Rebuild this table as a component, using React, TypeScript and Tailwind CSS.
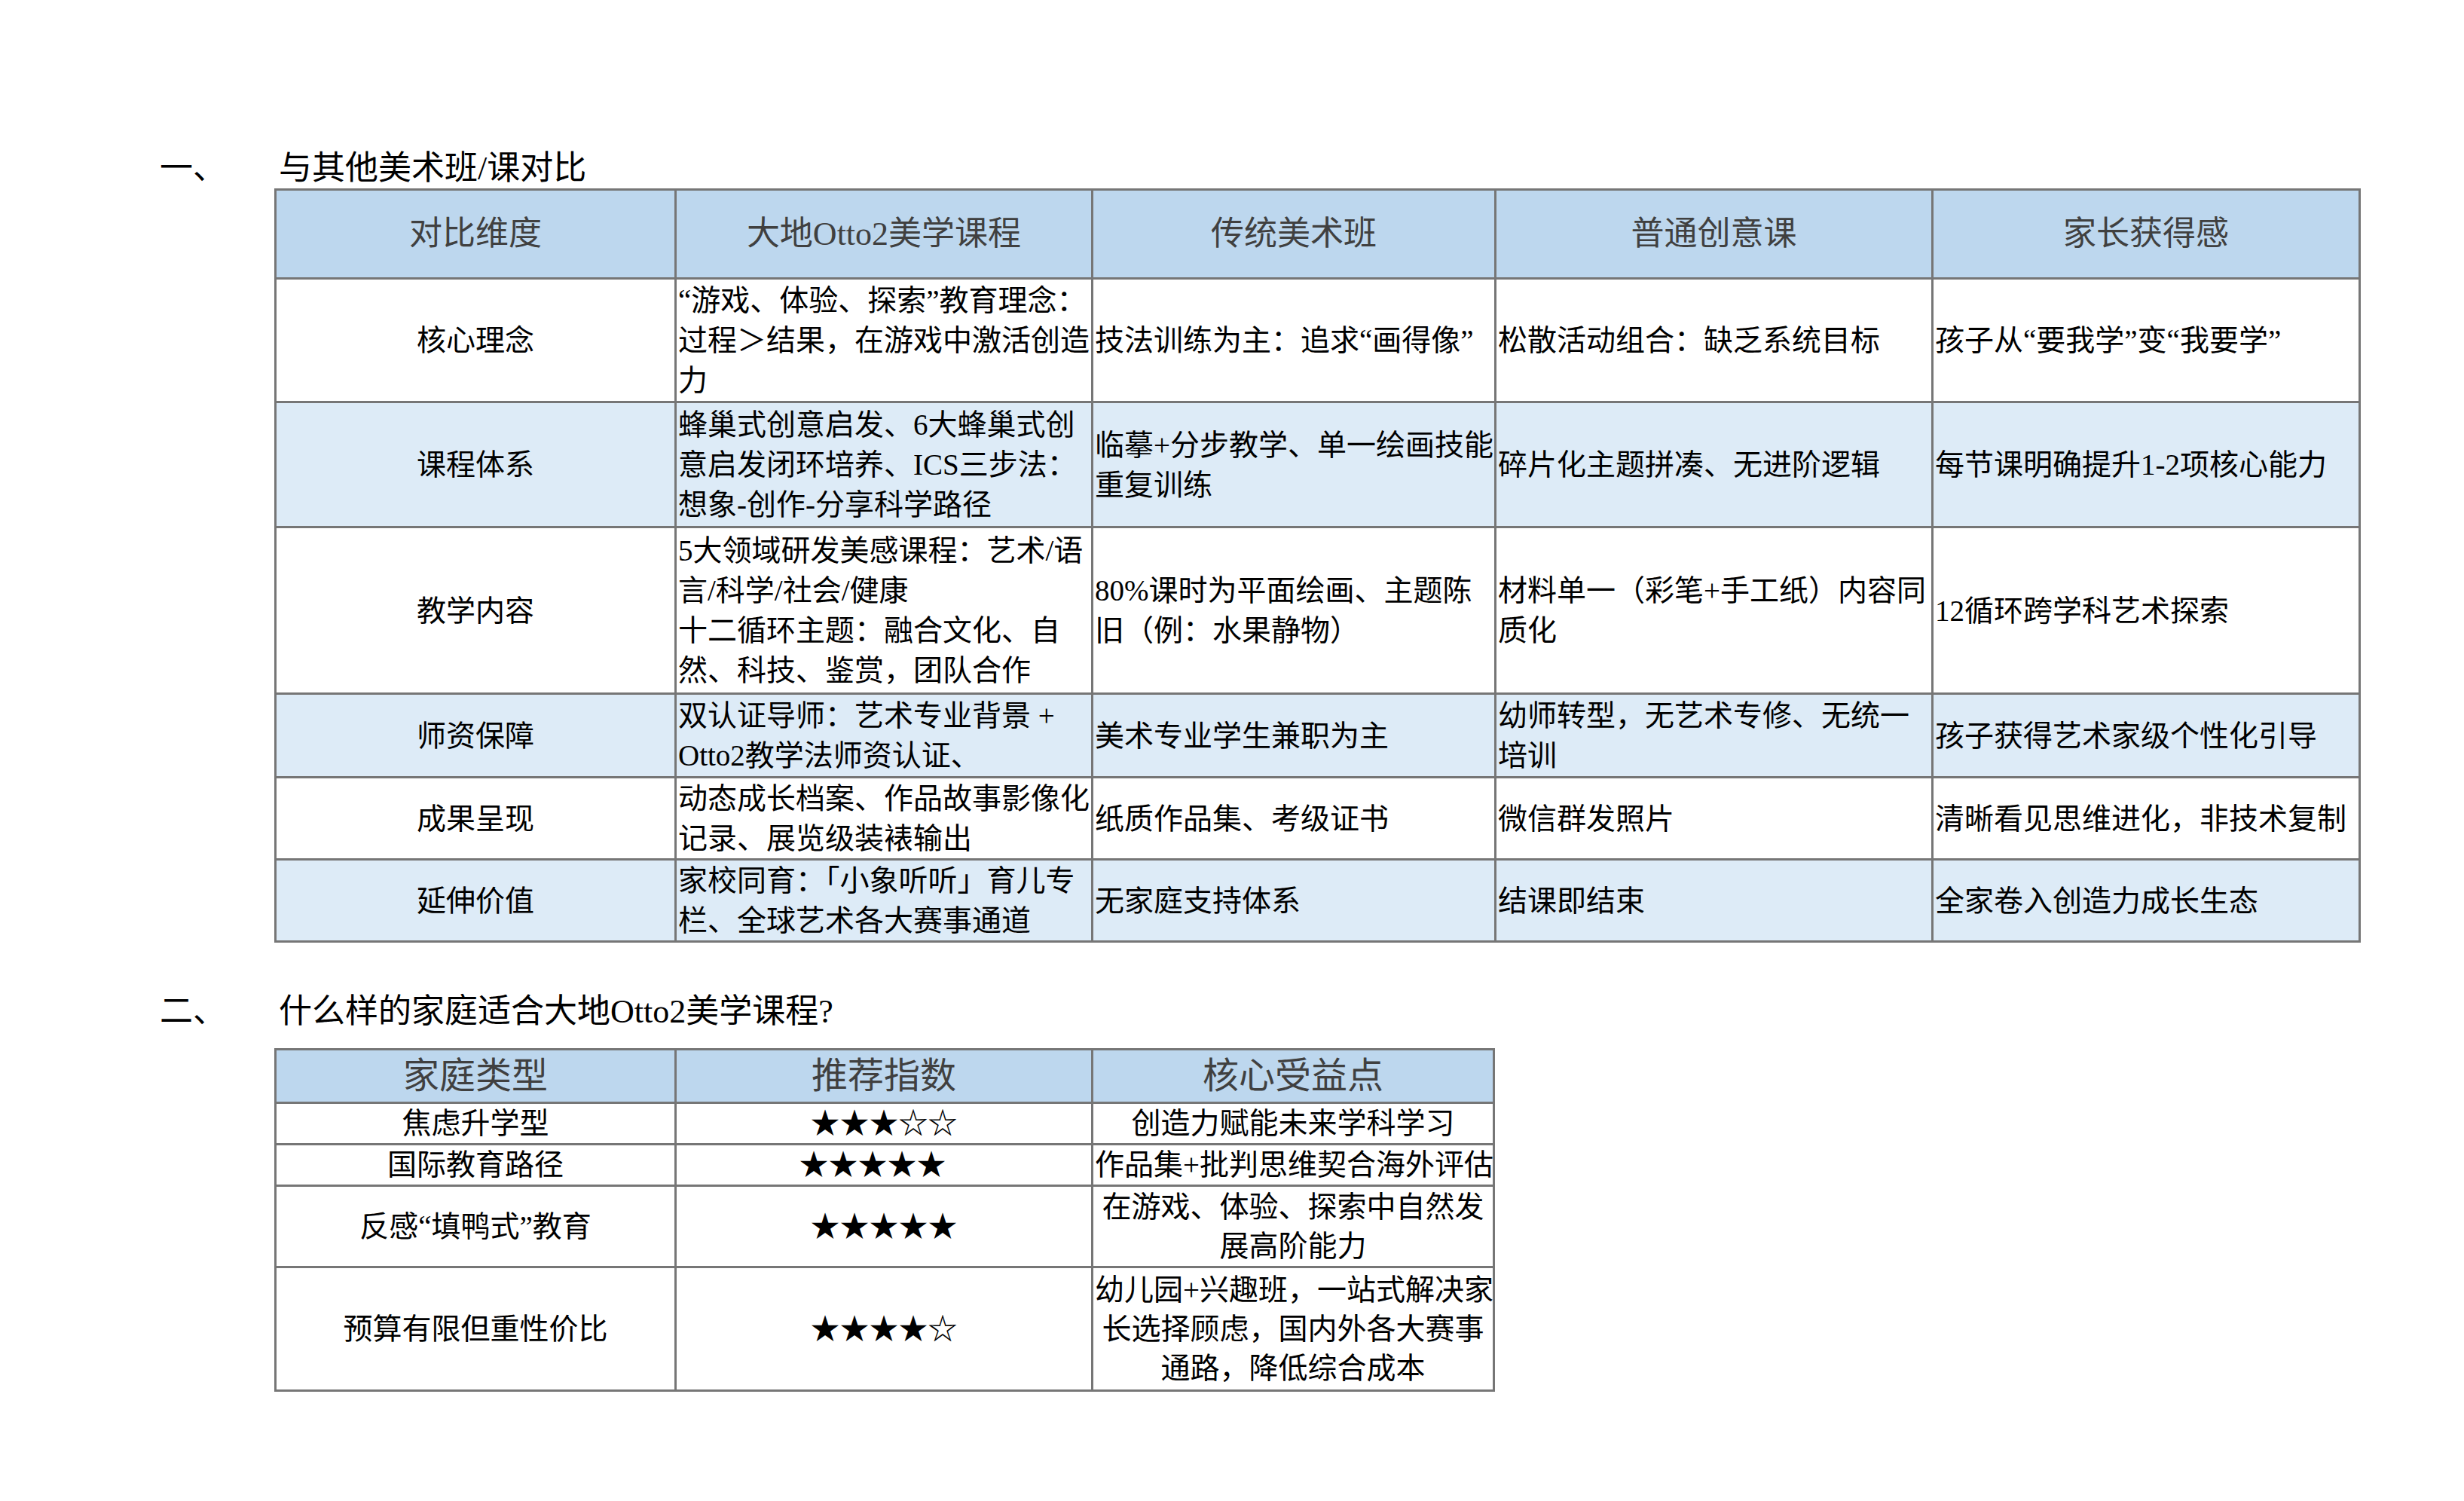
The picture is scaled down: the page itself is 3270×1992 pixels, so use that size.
import React from "react";

type Cell = string[];

const t1Header = ["对比维度", "大地Otto2美学课程", "传统美术班", "普通创意课", "家长获得感"];

const t1Rows: { h: string; bg: string; cells: Cell[] }[] = [
  {
    h: "h-[164px]",
    bg: "bg-white",
    cells: [
      ["核心理念"],
      ["“游戏、体验、探索”教育理念：", "过程＞结果，在游戏中激活创造", "力"],
      ["技法训练为主：追求“画得像”"],
      ["松散活动组合：缺乏系统目标"],
      ["孩子从“要我学”变“我要学”"],
    ],
  },
  {
    h: "h-[166px]",
    bg: "bg-[#ddebf7]",
    cells: [
      ["课程体系"],
      ["蜂巢式创意启发、6大蜂巢式创", "意启发闭环培养、ICS三步法：", "想象-创作-分享科学路径"],
      ["临摹+分步教学、单一绘画技能", "重复训练"],
      ["碎片化主题拼凑、无进阶逻辑"],
      ["每节课明确提升1-2项核心能力"],
    ],
  },
  {
    h: "h-[221px]",
    bg: "bg-white",
    cells: [
      ["教学内容"],
      ["5大领域研发美感课程：艺术/语", "言/科学/社会/健康", "十二循环主题：融合文化、自", "然、科技、鉴赏，团队合作"],
      ["80%课时为平面绘画、主题陈", "旧（例：水果静物）"],
      ["材料单一（彩笔+手工纸）内容同", "质化"],
      ["12循环跨学科艺术探索"],
    ],
  },
  {
    h: "h-[111px]",
    bg: "bg-[#ddebf7]",
    cells: [
      ["师资保障"],
      ["双认证导师：艺术专业背景 +", "Otto2教学法师资认证、"],
      ["美术专业学生兼职为主"],
      ["幼师转型，无艺术专修、无统一", "培训"],
      ["孩子获得艺术家级个性化引导"],
    ],
  },
  {
    h: "h-[109px]",
    bg: "bg-white",
    cells: [
      ["成果呈现"],
      ["动态成长档案、作品故事影像化", "记录、展览级装裱输出"],
      ["纸质作品集、考级证书"],
      ["微信群发照片"],
      ["清晰看见思维进化，非技术复制"],
    ],
  },
  {
    h: "h-[109px]",
    bg: "bg-[#ddebf7]",
    cells: [
      ["延伸价值"],
      ["家校同育：「小象听听」育儿专", "栏、全球艺术各大赛事通道"],
      ["无家庭支持体系"],
      ["结课即结束"],
      ["全家卷入创造力成长生态"],
    ],
  },
];

const t2Rows: { h: string; cells: Cell[]; starPad?: boolean }[] = [
  { h: "h-[53px]", cells: [["焦虑升学型"], ["★★★☆☆"], ["创造力赋能未来学科学习"]] },
  { h: "h-[55px]", cells: [["国际教育路径"], ["★★★★★"], ["作品集+批判思维契合海外评估"]], starPad: true },
  {
    h: "h-[108px]",
    cells: [["反感“填鸭式”教育"], ["★★★★★"], ["在游戏、体验、探索中自然发", "展高阶能力"]],
  },
  {
    h: "h-[164px]",
    cells: [
      ["预算有限但重性价比"],
      ["★★★★☆"],
      ["幼儿园+兴趣班，一站式解决家", "长选择顾虑，国内外各大赛事", "通路，降低综合成本"],
    ],
  },
];

function Lines({ lines }: { lines: string[] }) {
  return (
    <>
      {lines.map((l, i) => (
        <div key={i} className="whitespace-pre">
          {l}
        </div>
      ))}
    </>
  );
}

export default function App() {
  return (
    <div className="w-[3270px] h-[1992px] bg-white text-black font-['Liberation_Serif','Noto_Sans_CJK_SC',sans-serif]">
      <div className="pt-[198px]">
        <h2 className="flex h-[52px] items-center text-[44px] leading-[52px] font-normal">
          <span className="ml-[212px] w-[158px]">一、</span>
          <span>与其他美术班/课对比</span>
        </h2>
        <table className="ml-[364px] w-[2766px] table-fixed border-collapse">
          <colgroup>
            <col className="w-[531px]" />
            <col className="w-[553px]" />
            <col className="w-[535px]" />
            <col className="w-[580px]" />
            <col className="w-[567px]" />
          </colgroup>
          <thead>
            <tr className="h-[118px] bg-[#bdd7ee]">
              {t1Header.map((h, i) => (
                <th
                  key={i}
                  className="border-[3px] border-[#767676] p-0 text-center align-middle text-[44px] leading-[52px] font-normal text-[#404040]"
                >
                  {h}
                </th>
              ))}
            </tr>
          </thead>
          <tbody>
            {t1Rows.map((r, ri) => (
              <tr key={ri} className={`${r.h} ${r.bg}`}>
                {r.cells.map((c, ci) => (
                  <td
                    key={ci}
                    className={`border-[3px] border-[#767676] px-[2px] py-0 align-middle text-[39px] leading-[53px] ${
                      ci === 0 ? "text-center" : "text-left"
                    }`}
                  >
                    <Lines lines={c} />
                  </td>
                ))}
              </tr>
            ))}
          </tbody>
        </table>

        <h2 className="mt-[66px] flex h-[52px] items-center text-[44px] leading-[52px] font-normal">
          <span className="ml-[212px] w-[158px]">二、</span>
          <span>什么样的家庭适合大地Otto2美学课程?</span>
        </h2>
        <table className="ml-[364px] mt-[22px] w-[1617px] table-fixed border-collapse">
          <colgroup>
            <col className="w-[531px]" />
            <col className="w-[553px]" />
            <col className="w-[533px]" />
          </colgroup>
          <thead>
            <tr className="h-[71px] bg-[#bdd7ee]">
              {["家庭类型", "推荐指数", "核心受益点"].map((h, i) => (
                <th
                  key={i}
                  className="border-[3px] border-[#767676] p-0 text-center align-middle text-[48px] leading-[60px] font-normal text-[#404040]"
                >
                  {h}
                </th>
              ))}
            </tr>
          </thead>
          <tbody>
            {t2Rows.map((r, ri) => (
              <tr key={ri} className={`${r.h} bg-white`}>
                {r.cells.map((c, ci) => (
                  <td
                    key={ci}
                    className={`border-[3px] border-[#767676] py-0 text-center align-middle text-[39px] leading-[52px] ${
                      ci === 1 && r.starPad ? "pl-0 pr-[30px]" : "px-[2px]"
                    }`}
                  >
                    <Lines lines={c} />
                  </td>
                ))}
              </tr>
            ))}
          </tbody>
        </table>
      </div>
    </div>
  );
}
